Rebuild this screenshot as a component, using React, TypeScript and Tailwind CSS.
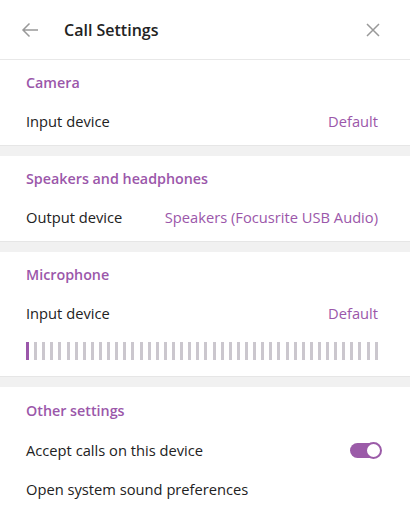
import { useState } from 'react'

const BAR_COUNT = 44

function Section({ title, children, last }: { title: string; children: React.ReactNode; last?: boolean }) {
  return (
    <div className={last ? 'bg-white flex-1 pt-[1px]' : 'bg-white'}>
      <div className="h-[44px] pt-[2px] pl-[26px] pr-[32px] flex items-center text-[14.3px] font-semibold text-[#9b57aa]">{title}</div>
      {children}
    </div>
  )
}

function Row({ label, value, h = 'h-[34px]' }: { label: string; value?: string; h?: string }) {
  return (
    <div className={`${h} pl-[26px] pr-[32px] flex items-center justify-between text-[14.7px] text-[#222]`}>
      <span>{label}</span>
      {value && <span className="text-[#9b57aa]">{value}</span>}
    </div>
  )
}

function Divider() {
  return <div className="h-[11px] bg-[#f1f1f1] border-t border-[#e6e6e6]" />
}

export default function App() {
  const [accept, setAccept] = useState(true)

  return (
    <div className="w-[410px] h-[529px] flex flex-col bg-white overflow-hidden" style={{ fontFamily: '"Open Sans", "Noto Sans", sans-serif' }}>
      {/* Header */}
      <div className="h-[60px] flex items-center border-b border-[#e8e8e8] shrink-0">
        <button className="w-[60px] h-full flex items-center justify-center text-[#999]">
          <svg width="18" height="16" viewBox="0 0 18 16" fill="none" stroke="currentColor" strokeWidth="1.5">
            <path d="M17 8H2M8.5 1.5L2 8l6.5 6.5" />
          </svg>
        </button>
        <div className="flex-1 pl-[4px] text-[16px] font-semibold text-[#222]">Call Settings</div>
        <button className="w-[58px] h-full flex items-center justify-center pr-[16px] text-[#999]">
          <svg width="14" height="14" viewBox="0 0 14 14" fill="none" stroke="currentColor" strokeWidth="1.5">
            <path d="M1 1l12 12M13 1L1 13" />
          </svg>
        </button>
      </div>

      <Section title="Camera">
        <Row label="Input device" value="Default" />
        <div className="h-[7px]" />
      </Section>
      <Divider />

      <Section title="Speakers and headphones">
        <Row label="Output device" value="Speakers (Focusrite USB Audio)" />
        <div className="h-[7px]" />
      </Section>
      <Divider />

      <Section title="Microphone">
        <Row label="Input device" value="Default" />
        <div className="pl-[26px] pr-[32px] pt-[12px] pb-[16px]">
          <div className="h-[18px] flex justify-between">
            {Array.from({ length: BAR_COUNT }).map((_, i) => (
              <div key={i} className={i === 0 ? 'w-[3px] h-full bg-[#9b57aa]' : 'w-[3px] h-full bg-[#cbc7ce]'} />
            ))}
          </div>
        </div>
      </Section>
      <Divider />

      <Section title="Other settings" last>
        <div className="h-[36px] pl-[26px] pr-[32px] flex items-center justify-between text-[14.7px] text-[#222]">
          <span>Accept calls on this device</span>
          <button
            onClick={() => setAccept(!accept)}
            className="relative w-[31px] h-[15px] rounded-full bg-[#9b5ba8] mr-[-3px]"
          >
            <span className="absolute right-[-1px] top-[-1px] w-[17px] h-[17px] rounded-full bg-white border-2 border-[#9b5ba8]" />
          </button>
        </div>
        <Row label="Open system sound preferences" h="h-[42px]" />
      </Section>
    </div>
  )
}
